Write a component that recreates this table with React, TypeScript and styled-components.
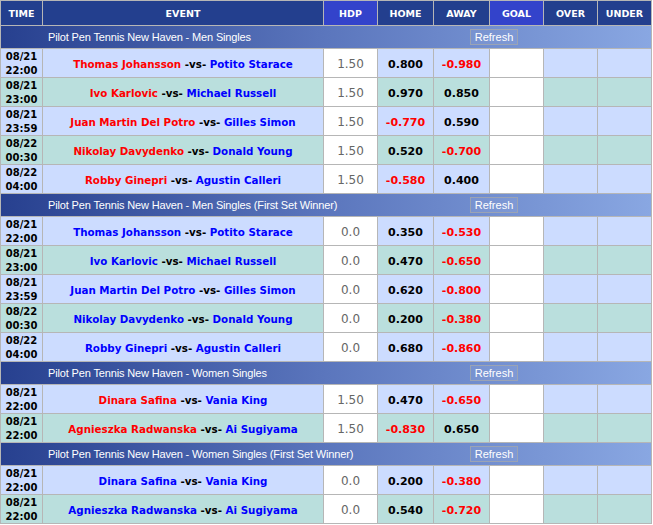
import React from "react";
import styled, { createGlobalStyle } from "styled-components";

const Global = createGlobalStyle`
  html, body { margin: 0; padding: 0; background: #ffffff; }
  body { font-family: "Liberation Sans", Arial, sans-serif; }
  *, *::before, *::after { box-sizing: border-box; }
`;

const COLS = "41px 280px 53px 55px 55px 53px 53px 53px";

const Board = styled.div`
  display: flex;
  flex-direction: column;
  gap: 1px;
  padding: 1px;
  background: #b6b6b6;
  width: fit-content;
`;

const HeaderRow = styled.div`
  display: grid;
  grid-template-columns: ${COLS};
  gap: 1px;
`;

const HeadCell = styled.div<{ $accent?: boolean }>`
  height: 24px;
  display: flex;
  align-items: center;
  justify-content: center;
  background: ${(p) => (p.$accent ? "#3343cb" : "#233f8e")};
  color: #ffffff;
  font-family: "DejaVu Sans", Verdana, sans-serif;
  font-weight: bold;
  font-size: 9.5px;
`;

const SectionBar = styled.div`
  height: 22px;
  display: flex;
  align-items: center;
  padding-left: 47px;
  background: linear-gradient(to right, #27408f 0%, #5b76bd 50%, #89a7e2 100%);
`;

const SectionTitle = styled.div`
  flex: 0 0 422px;
  color: #ffffff;
  font-size: 11px;
  letter-spacing: -0.15px;
  white-space: nowrap;
`;

const RefreshButton = styled.button`
  height: 16px;
  width: 48px;
  padding: 0;
  border: 1px solid #9aa3b5;
  background: rgba(255, 255, 255, 0.06);
  color: #ffffff;
  font-family: "Liberation Sans", Arial, sans-serif;
  font-size: 11px;
  line-height: 14px;
  cursor: pointer;
`;

const DataRow = styled.div`
  display: grid;
  grid-template-columns: ${COLS};
  gap: 1px;
`;

const Cell = styled.div<{ $bg: string }>`
  height: 28px;
  padding-top: 2px;
  display: flex;
  align-items: center;
  justify-content: center;
  text-align: center;
  background: ${(p) => p.$bg};
`;

const TimeText = styled.div`
  font-family: "DejaVu Sans", Verdana, sans-serif;
  font-weight: bold;
  font-size: 10px;
  line-height: 14px;
  color: #000000;
`;

const EventText = styled.div`
  font-family: "DejaVu Sans", Verdana, sans-serif;
  font-weight: bold;
  font-size: 10.3px;
  white-space: nowrap;
`;

const Team = styled.span<{ $red?: boolean }>`
  color: ${(p) => (p.$red ? "#ff0000" : "#0000ff")};
`;

const Vs = styled.span`
  color: #000000;
`;

const HdpText = styled.span`
  font-family: "DejaVu Sans", Verdana, sans-serif;
  font-size: 12px;
  color: #666666;
`;

const OddsText = styled.span<{ $neg: boolean }>`
  font-family: "DejaVu Sans", Verdana, sans-serif;
  font-weight: bold;
  font-size: 11px;
  color: ${(p) => (p.$neg ? "#ff0000" : "#000000")};
`;

type Match = {
  date: string;
  time: string;
  home: string;
  away: string;
  hdp: string;
  h: string;
  a: string;
};

type Section = { title: string; redHome: boolean; matches: Match[] };

const men = [
  ["08/21", "22:00", "Thomas Johansson", "Potito Starace"],
  ["08/21", "23:00", "Ivo Karlovic", "Michael Russell"],
  ["08/21", "23:59", "Juan Martin Del Potro", "Gilles Simon"],
  ["08/22", "00:30", "Nikolay Davydenko", "Donald Young"],
  ["08/22", "04:00", "Robby Ginepri", "Agustin Calleri"],
];
const women = [
  ["08/21", "22:00", "Dinara Safina", "Vania King"],
  ["08/21", "22:00", "Agnieszka Radwanska", "Ai Sugiyama"],
];

const build = (base: string[][], hdp: string, odds: string[][]): Match[] =>
  base.map((b, i) => ({
    date: b[0],
    time: b[1],
    home: b[2],
    away: b[3],
    hdp,
    h: odds[i][0],
    a: odds[i][1],
  }));

const sections: Section[] = [
  {
    title: "Pilot Pen Tennis New Haven - Men Singles",
    redHome: true,
    matches: build(men, "1.50", [
      ["0.800", "-0.980"],
      ["0.970", "0.850"],
      ["-0.770", "0.590"],
      ["0.520", "-0.700"],
      ["-0.580", "0.400"],
    ]),
  },
  {
    title: "Pilot Pen Tennis New Haven - Men Singles (First Set Winner)",
    redHome: false,
    matches: build(men, "0.0", [
      ["0.350", "-0.530"],
      ["0.470", "-0.650"],
      ["0.620", "-0.800"],
      ["0.200", "-0.380"],
      ["0.680", "-0.860"],
    ]),
  },
  {
    title: "Pilot Pen Tennis New Haven - Women Singles",
    redHome: true,
    matches: build(women, "1.50", [
      ["0.470", "-0.650"],
      ["-0.830", "0.650"],
    ]),
  },
  {
    title: "Pilot Pen Tennis New Haven - Women Singles (First Set Winner)",
    redHome: false,
    matches: build(women, "0.0", [
      ["0.200", "-0.380"],
      ["0.540", "-0.720"],
    ]),
  },
];

const headers: [string, boolean][] = [
  ["TIME", false],
  ["EVENT", false],
  ["HDP", true],
  ["HOME", false],
  ["AWAY", false],
  ["GOAL", true],
  ["OVER", false],
  ["UNDER", false],
];

const BLUE = "#ccdcff";
const TEAL = "#badfdd";
const WHITE = "#ffffff";

export default function App() {
  return (
    <>
      <Global />
      <Board>
        <HeaderRow>
          {headers.map(([h, acc]) => (
            <HeadCell key={h} $accent={acc}>
              {h}
            </HeadCell>
          ))}
        </HeaderRow>
        {sections.map((s) => (
          <React.Fragment key={s.title}>
            <SectionBar>
              <SectionTitle>{s.title}</SectionTitle>
              <RefreshButton type="button">Refresh</RefreshButton>
            </SectionBar>
            {s.matches.map((m, i) => {
              const bg = i % 2 === 0 ? BLUE : TEAL;
              return (
                <DataRow key={i}>
                  <Cell $bg={bg}>
                    <TimeText>
                      {m.date}
                      <br />
                      {m.time}
                    </TimeText>
                  </Cell>
                  <Cell $bg={bg}>
                    <EventText>
                      <Team $red={s.redHome}>{m.home}</Team>
                      <Vs> -vs- </Vs>
                      <Team>{m.away}</Team>
                    </EventText>
                  </Cell>
                  <Cell $bg={WHITE}>
                    <HdpText>{m.hdp}</HdpText>
                  </Cell>
                  <Cell $bg={bg}>
                    <OddsText $neg={m.h.startsWith("-")}>{m.h}</OddsText>
                  </Cell>
                  <Cell $bg={bg}>
                    <OddsText $neg={m.a.startsWith("-")}>{m.a}</OddsText>
                  </Cell>
                  <Cell $bg={WHITE} />
                  <Cell $bg={bg} />
                  <Cell $bg={bg} />
                </DataRow>
              );
            })}
          </React.Fragment>
        ))}
      </Board>
    </>
  );
}
